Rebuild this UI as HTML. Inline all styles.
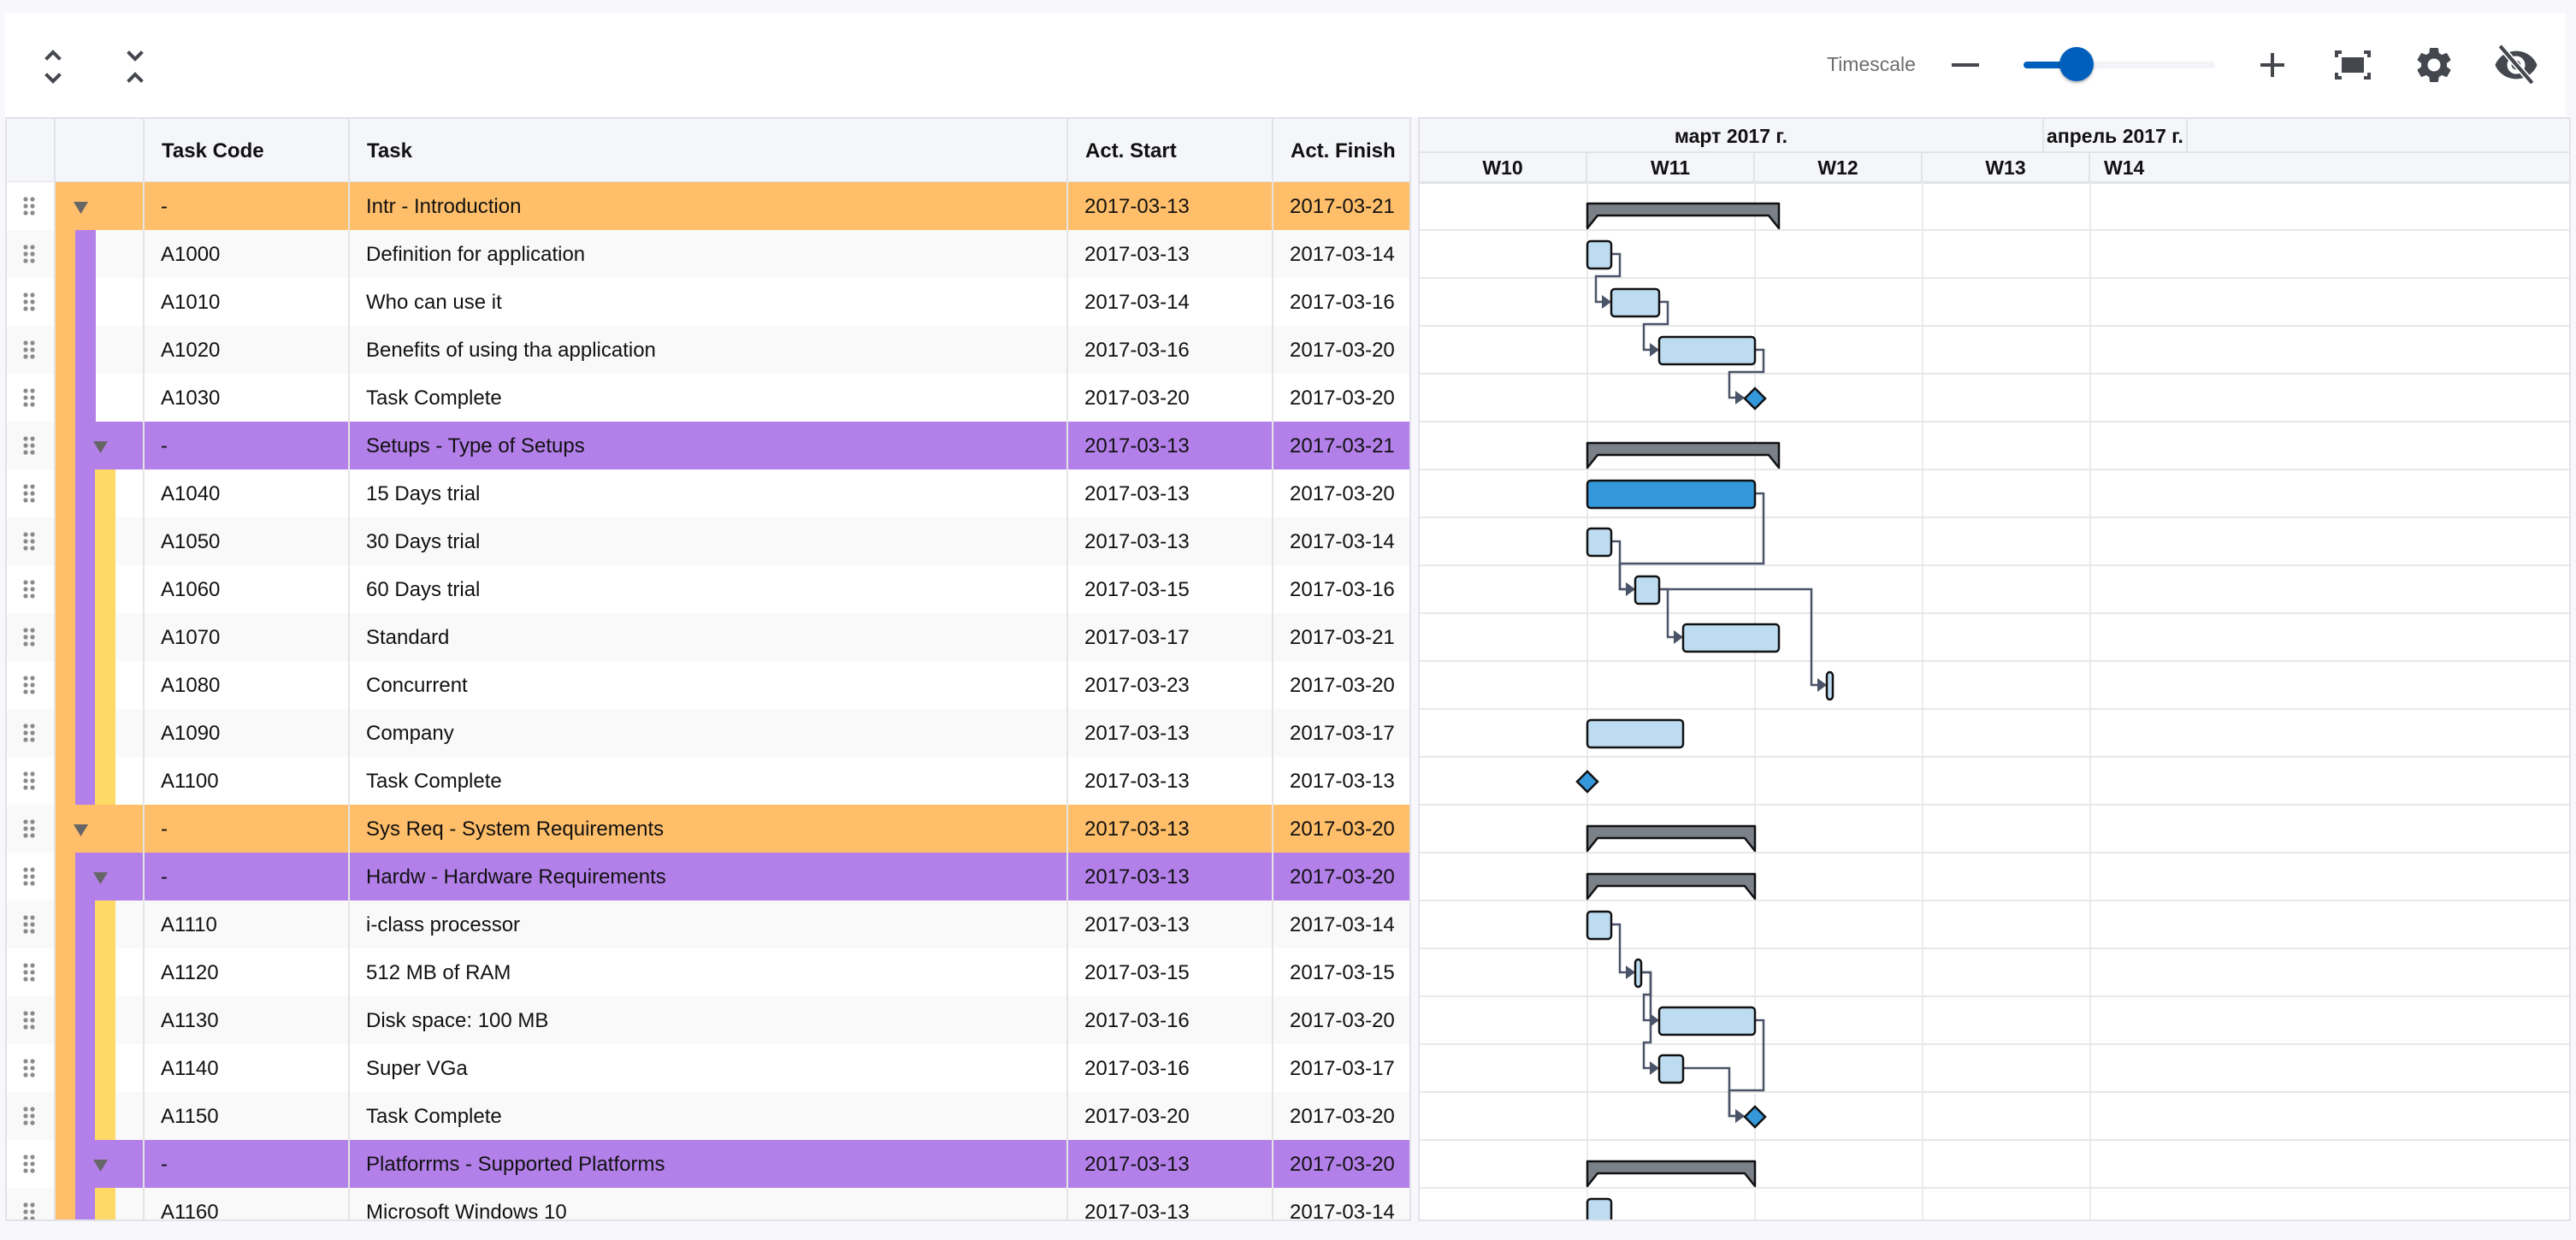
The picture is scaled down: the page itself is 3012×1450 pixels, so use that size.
<!DOCTYPE html>
<html><head><meta charset="utf-8">
<style>
*{box-sizing:border-box;margin:0;padding:0}
body{width:3012px;height:1450px;background:#f8f8fc;font-family:"Liberation Sans",Arial,sans-serif;position:relative;overflow:hidden;color:#111}
.abs{position:absolute}
#tb{left:6px;top:15px;width:2994px;height:122px;background:#fff}
#grid{left:6px;top:137px;width:1644px;height:1291px;background:#fff;border:2px solid #e2e3e8;overflow:hidden}
#gantt{left:1658px;top:137px;width:1348px;height:1291px;background:#fff;border:2px solid #e2e3e8;border-left:2px solid #e2e3e8;overflow:hidden}
.hd{position:absolute;top:0;height:76px;background:#f5f6fa;border-right:2px solid #e2e3e8;border-bottom:3px solid #e2e3e8;font-weight:bold;font-size:24px;line-height:76px;padding-left:20px}
.row{position:absolute;left:0;width:1644px;height:56px;border-bottom:2px solid #e6e6e6}
.c{position:absolute;top:0;height:56px;line-height:58px;font-size:24px;border-right:2px solid #e4e4e4;padding-left:19px;white-space:nowrap}
.gh{position:absolute;font-weight:bold;font-size:23px;text-align:center;background:#f5f6fa;border-right:2px solid #e2e3e8;border-bottom:2px solid #e2e3e8}
</style></head><body>
<div id="tb" class="abs">
 <svg class="abs" style="left:0;top:0" width="2994" height="122" fill="none" stroke="#45474f" stroke-width="4" stroke-linecap="square">
  <path d="M49 53 L56 46 L63 53 M49 73 L56 80 L63 73"/>
  <path d="M145 47 L152 54 L159 47 M145 79 L152 72 L159 79"/>
  <path d="M2278 61 H2306" stroke-width="4"/>
  <path d="M2651 47 V75 M2637 61 H2665" stroke-width="4" stroke-linecap="butt"/>
  <path d="M2726 52 V46 H2732 M2758 46 H2764 V52 M2764 70 V76 H2758 M2732 76 H2726 V70" stroke-width="4" stroke-linecap="butt"/>
  <rect x="2732" y="52" width="26" height="18" fill="#45474f" stroke="none"/>
 </svg>
 <div class="abs" style="left:2130px;top:47px;font-size:23px;color:#6d6d6d">Timescale</div>
 <div class="abs" style="left:2360px;top:57px;width:224px;height:8px;border-radius:4px;background:#f3f4f7"></div>
 <div class="abs" style="left:2360px;top:57px;width:70px;height:8px;border-radius:4px;background:#005fbd"></div>
 <div class="abs" style="left:2402px;top:40px;width:40px;height:40px;border-radius:50%;background:#005fbd;box-shadow:0 2px 3px rgba(0,0,0,.3)"></div>
 <svg class="abs" style="left:2815px;top:36px" width="50" height="50" viewBox="0 0 24 24"><path fill="#45474f" d="M19.14 12.94c.04-.3.06-.61.06-.94 0-.32-.02-.64-.07-.94l2.03-1.58a.49.49 0 0 0 .12-.61l-1.92-3.32a.49.49 0 0 0-.59-.22l-2.39.96c-.5-.38-1.030-.7-1.62-.94l-.36-2.54a.48.48 0 0 0-.48-.41h-3.84c-.24 0-.43.17-.47.41l-.36 2.54c-.59.24-1.13.57-1.620.94l-2.39-.96a.48.48 0 0 0-.59.22L2.74 8.87c-.12.21-.08.47.12.61l2.03 1.58c-.05.3-.09.63-.09.94s.02.64.07.94l-2.03 1.58a.49.49 0 0 0-.12.61l1.92 3.32c.12.22.37.29.59.22l2.39-.96c.5.38 1.03.7 1.62.94l.36 2.54c.05.24.24.41.48.41h3.84c.24 0 .44-.17.47-.41l.36-2.54c.59-.24 1.13-.56 1.62-.94l2.39.96c.22.08.47 0 .59-.22l1.920-3.32c.12-.22.07-.47-.12-.61l-2.01-1.58zM12 15.6A3.6 3.6 0 1 1 12 8.4a3.6 3.6 0 0 1 0 7.2z"/></svg>
 <svg class="abs" style="left:2908px;top:33px" width="56" height="56" viewBox="0 0 24 24"><path fill="#45474f" d="M12 5C7 5 3 8.1 1.5 12 3 15.9 7 19 12 19s9-3.1 10.5-7C21 8.1 17 5 12 5zm0 11.5a4.5 4.5 0 1 1 0-9 4.5 4.5 0 0 1 0 9z"/><circle cx="12" cy="12" r="2.3" fill="#45474f"/><path d="M4 2.5 L20 21" stroke="#fff" stroke-width="3.2"/><path d="M4 2.5 L20 21" stroke="#45474f" stroke-width="1.8"/></svg>
</div>
<div id="grid" class="abs"></div>
<div id="gantt" class="abs"></div>
<script>
var O='#ffbe69',P='#b380ea',Y='#ffd966';
var R=[
[0,'g','-','Intr - Introduction','2017-03-13','2017-03-21',13,21,'s'],
[1,'t','A1000','Definition for application','2017-03-13','2017-03-14',13,14],
[1,'t','A1010','Who can use it','2017-03-14','2017-03-16',14,16],
[1,'t','A1020','Benefits of using tha application','2017-03-16','2017-03-20',16,20],
[1,'t','A1030','Task Complete','2017-03-20','2017-03-20',20,20,'m'],
[1,'g','-','Setups - Type of Setups','2017-03-13','2017-03-21',13,21,'s'],
[2,'t','A1040','15 Days trial','2017-03-13','2017-03-20',13,20,'d'],
[2,'t','A1050','30 Days trial','2017-03-13','2017-03-14',13,14],
[2,'t','A1060','60 Days trial','2017-03-15','2017-03-16',15,16],
[2,'t','A1070','Standard','2017-03-17','2017-03-21',17,21],
[2,'t','A1080','Concurrent','2017-03-23','2017-03-20',23,23],
[2,'t','A1090','Company','2017-03-13','2017-03-17',13,17],
[2,'t','A1100','Task Complete','2017-03-13','2017-03-13',13,13,'m'],
[0,'g','-','Sys Req - System Requirements','2017-03-13','2017-03-20',13,20,'s'],
[1,'g','-','Hardw - Hardware Requirements','2017-03-13','2017-03-20',13,20,'s'],
[2,'t','A1110','i-class processor','2017-03-13','2017-03-14',13,14],
[2,'t','A1120','512 MB of RAM','2017-03-15','2017-03-15',15,15],
[2,'t','A1130','Disk space: 100 MB','2017-03-16','2017-03-20',16,20],
[2,'t','A1140','Super VGa','2017-03-16','2017-03-17',16,17],
[2,'t','A1150','Task Complete','2017-03-20','2017-03-20',20,20,'m'],
[1,'g','-','Platforrms - Supported Platforms','2017-03-13','2017-03-20',13,20,'s'],
[2,'t','A1160','Microsoft Windows 10','2017-03-13','2017-03-14',13,14]];
var g=document.getElementById('grid'),h='';
var cols=[[0,57],[57,104],[161,240],[401,840],[1241,240],[1481,161]];
var hl=['','','Task Code','Task','Act. Start','Act. Finish'];
for(var i=0;i<6;i++)h+='<div class="hd" style="left:'+cols[i][0]+'px;width:'+cols[i][1]+'px">'+hl[i]+'</div>';
var lc=[O,P,Y];
R.forEach(function(r,i){
 var top=74+i*56,bg=i%2?'#f9f9f9':'#fff',lv=r[0],grp=r[1]=='g';
 var rc=grp?lc[lv]:bg;
 h+='<div class="row" style="top:'+top+'px;background:'+bg+'">';
 h+='<div class="c" style="left:0;width:57px;background:'+bg+'"><svg width="16" height="24" style="position:absolute;left:19px;top:17px" fill="#8a8a8a"><circle cx="3" cy="3" r="2.6"/><circle cx="11" cy="3" r="2.6"/><circle cx="3" cy="11" r="2.6"/><circle cx="11" cy="11" r="2.6"/><circle cx="3" cy="19" r="2.6"/><circle cx="11" cy="19" r="2.6"/></svg></div>';
 var s='<div class="c" style="left:57px;width:104px;padding:0;background:'+bg+'">';
 var nst=grp?lv:lv+1;
 for(var k=0;k<nst;k++)s+='<div style="position:absolute;top:0;height:56px;left:'+(k*23)+'px;width:24px;background:'+lc[k]+'"></div>';
 if(grp){s+='<div style="position:absolute;top:0;height:56px;left:'+(lv*23)+'px;right:0;background:'+lc[lv]+'"></div>';
  s+='<svg width="18" height="14" style="position:absolute;left:'+(21+lv*23)+'px;top:23px"><path d="M0 0H17L8.5 14Z" fill="#666"/></svg>';}
 s+='</div>';h+=s;
 var tx=[r[2],r[3],r[4],r[5]];
 for(var j=2;j<6;j++)h+='<div class="c" style="left:'+cols[j][0]+'px;width:'+cols[j][1]+'px;background:'+rc+'">'+tx[j-2]+'</div>';
 h+='</div>';
});
g.innerHTML=h;
var G=document.getElementById('gantt'),DW=28;
function dx(d){return (d-6)*DW;}
var s='<div class="gh" style="left:0;top:0;width:730px;height:40px;line-height:40px">март 2017 г.</div>';
s+='<div class="gh" style="left:730px;top:0;width:168px;height:40px;line-height:40px">апрель 2017 г.</div>';
s+='<div class="gh" style="left:898px;top:0;width:460px;height:40px;border-right:none"></div>';
var wk=['W10','W11','W12','W13','W14'];
for(var i=0;i<4;i++)s+='<div class="gh" style="left:'+(i*196)+'px;top:40px;width:196px;height:36px;line-height:35px;border-bottom-width:3px">'+wk[i]+'</div>';
s+='<div class="gh" style="left:784px;top:40px;width:570px;height:36px;line-height:35px;border-bottom-width:3px;text-align:left;padding-left:16px;border-right:none">W14</div>';
var svg='<svg width="1348" height="1240" style="position:absolute;left:0;top:74px">';
for(var i=1;i<5;i++)svg+='<line x1="'+(i*196)+'" y1="0" x2="'+(i*196)+'" y2="1240" stroke="#ebebeb" stroke-width="2"/>';
for(var i=1;i<=22;i++)svg+='<line x1="0" y1="'+(i*56)+'" x2="1348" y2="'+(i*56)+'" stroke="#e8e8e8" stroke-width="2"/>';
var L='#4a5468';
function link(a,b){var ra=R[a],rb=R[b];var x1=dx(ra[7]);if(ra[7]==ra[6])x1+=8;if(ra[8]=='m')x1+=12;
 var y1=a*56+28,y2=b*56+28,x2=dx(rb[6]);if(rb[8]=='m')x2-=12;
 var p;
 if(x2-18>=x1+9)p='M'+x1+' '+y1+'H'+(x2-18)+'V'+y2+'H'+(x2-10);
 else p='M'+x1+' '+y1+'H'+(x1+10)+'V'+(b*56-2)+'H'+(x2-18)+'V'+y2+'H'+(x2-10);
 svg+='<path d="'+p+'" fill="none" stroke="'+L+'" stroke-width="2.5"/>';
 svg+='<path d="M'+(x2-11)+' '+(y2-8)+'L'+x2+' '+y2+'L'+(x2-11)+' '+(y2+8)+'Z" fill="'+L+'"/>';}
[[1,2],[2,3],[3,4],[6,8],[7,8],[8,9],[8,10],[15,16],[16,17],[16,18],[17,19],[18,19]].forEach(function(l){link(l[0],l[1]);});
R.forEach(function(r,i){var y=i*56+1,x1=dx(r[6]),x2=dx(r[7]);
 if(r[8]=='s'){svg+='<path d="M'+x1+' '+(y+24)+'H'+x2+'V'+(y+53)+'L'+(x2-12)+' '+(y+38)+'H'+(x1+12)+'L'+x1+' '+(y+53)+'Z" fill="#7b8188" stroke="#111" stroke-width="2.5" stroke-linejoin="round"/>';}
 else if(r[8]=='m'){svg+='<path d="M'+x1+' '+(y+16)+'L'+(x1+12)+' '+(y+28)+'L'+x1+' '+(y+40)+'L'+(x1-12)+' '+(y+28)+'Z" fill="#3498db" stroke="#111" stroke-width="2.5"/>';}
 else{var w=x2-x1;if(w<8)w=7;svg+='<rect x="'+x1+'" y="'+(y+12)+'" width="'+w+'" height="32" rx="4" fill="'+(r[8]=='d'?'#3498db':'#bddcf2')+'" stroke="#111" stroke-width="2.5"/>';}
});
svg+='</svg>';
G.innerHTML=s+svg;
</script>
</body></html>
